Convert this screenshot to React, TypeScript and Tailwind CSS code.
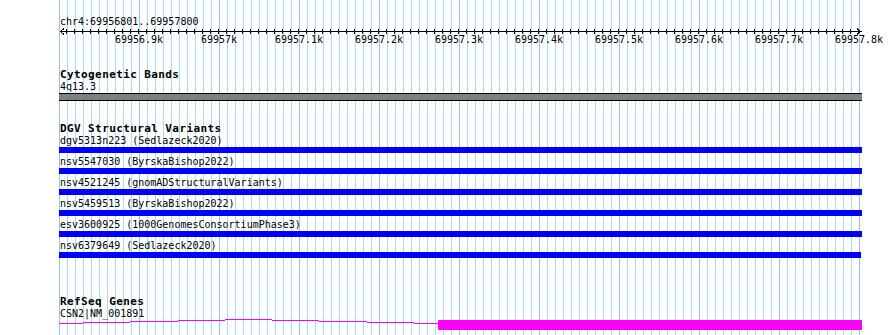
import React from "react";

const variants = [
  "dgv5313n223 (Sedlazeck2020)",
  "nsv5547030 (ByrskaBishop2022)",
  "nsv4521245 (gnomADStructuralVariants)",
  "nsv5459513 (ByrskaBishop2022)",
  "esv3600925 (1000GenomesConsortiumPhase3)",
  "nsv6379649 (Sedlazeck2020)",
];

const labels = [
  "69956.9k",
  "69957k",
  "69957.1k",
  "69957.2k",
  "69957.3k",
  "69957.4k",
  "69957.5k",
  "69957.6k",
  "69957.7k",
  "69957.8k",
];

function Grid() {
  const lines = [];
  for (let k = 0; k <= 100; k++) {
    const x = 59 + k * 8;
    lines.push(
      <rect
        key={k}
        x={x}
        y={0}
        width={1}
        height={335}
        fill={k % 10 === 0 ? "#90c4ee" : "#a4e2e8"}
      />
    );
  }
  return (
    <svg className="absolute left-0 top-0" width={890} height={335} shapeRendering="crispEdges">
      {lines}
    </svg>
  );
}

function Axis() {
  const ticks = [];
  for (let k = 1; k <= 100; k++) {
    const x = 58 + k * 8 - 59;
    ticks.push(<rect key={k} x={x} y={1} width={1} height={5} fill="#000" />);
  }
  return (
    <svg width={806} height={7} className="-ml-px -mb-px block" shapeRendering="crispEdges">
      <rect x={1} y={3} width={802} height={1} fill="#000" />
      {ticks}
      <polyline points="5,0.5 1.5,3.5 5,6.5" fill="none" stroke="#000" strokeWidth={1} />
      <polyline points="798,0.5 801.5,3.5 798,6.5" fill="none" stroke="#000" strokeWidth={1} />
    </svg>
  );
}

function Gene() {
  const segs: [number, number, number][] = [
    [59, 83, 323],
    [83, 130, 322],
    [130, 178, 321],
    [178, 225, 320],
    [225, 272, 319],
    [272, 319, 320],
    [319, 367, 321],
    [367, 414, 322],
    [414, 438, 323],
  ];
  return (
    <svg width={806} height={13} className="-ml-px -mt-[2px] block" shapeRendering="crispEdges">
      {segs.map(([a, b, y], i) => (
        <rect key={i} x={a - 59} y={y - 318} width={b - a} height={1} fill="#ff00ff" />
      ))}
      <rect x={438 - 59} y={320 - 318} width={862 - 438} height={10} fill="#ff00ff" />
    </svg>
  );
}

const reg =
  "h-[12px] leading-[12px] text-[10px] font-['DejaVu_Sans_Mono','Liberation_Mono',monospace] text-black whitespace-nowrap";
const bold =
  "h-[12px] leading-[12px] text-[11px] font-bold tracking-[0.4px] font-['DejaVu_Sans_Mono','Liberation_Mono',monospace] text-black whitespace-nowrap";

export default function App() {
  return (
    <div className="relative w-[890px] h-[335px] overflow-hidden bg-white font-['DejaVu_Sans_Mono',monospace]">
      <Grid />
      <div className="relative flex flex-col pl-[60px]">
        <div className={`mt-[16px] ${reg}`}>chr4:69956801..69957800</div>
        <Axis />
        <div className="-ml-[60px] pl-[99px] grid grid-cols-[repeat(10,80px)] w-[900px]">
          {labels.map((l) => (
            <div key={l} className={`${reg} text-center`}>
              {l}
            </div>
          ))}
        </div>

        <div className={`mt-[23px] ${bold}`}>Cytogenetic Bands</div>
        <div className={reg}>4q13.3</div>
        <div className="-ml-px w-[803px] h-[8px] bg-[#808080] border-y border-black" />

        <div className={`mt-[22px] ${bold}`}>DGV Structural Variants</div>
        {variants.map((v, i) => (
          <div key={v} className={`flex flex-col ${i > 0 ? "mt-[3px]" : ""}`}>
            <div className={reg}>{v}</div>
            <div className={`-ml-px h-[6px] bg-[#0000ff] ${i === 5 ? "w-[802px]" : "w-[803px]"}`} />
          </div>
        ))}

        <div className={`mt-[38px] ${bold}`}>RefSeq Genes</div>
        <div className={reg}>CSN2|NM_001891</div>
        <Gene />
      </div>
    </div>
  );
}
